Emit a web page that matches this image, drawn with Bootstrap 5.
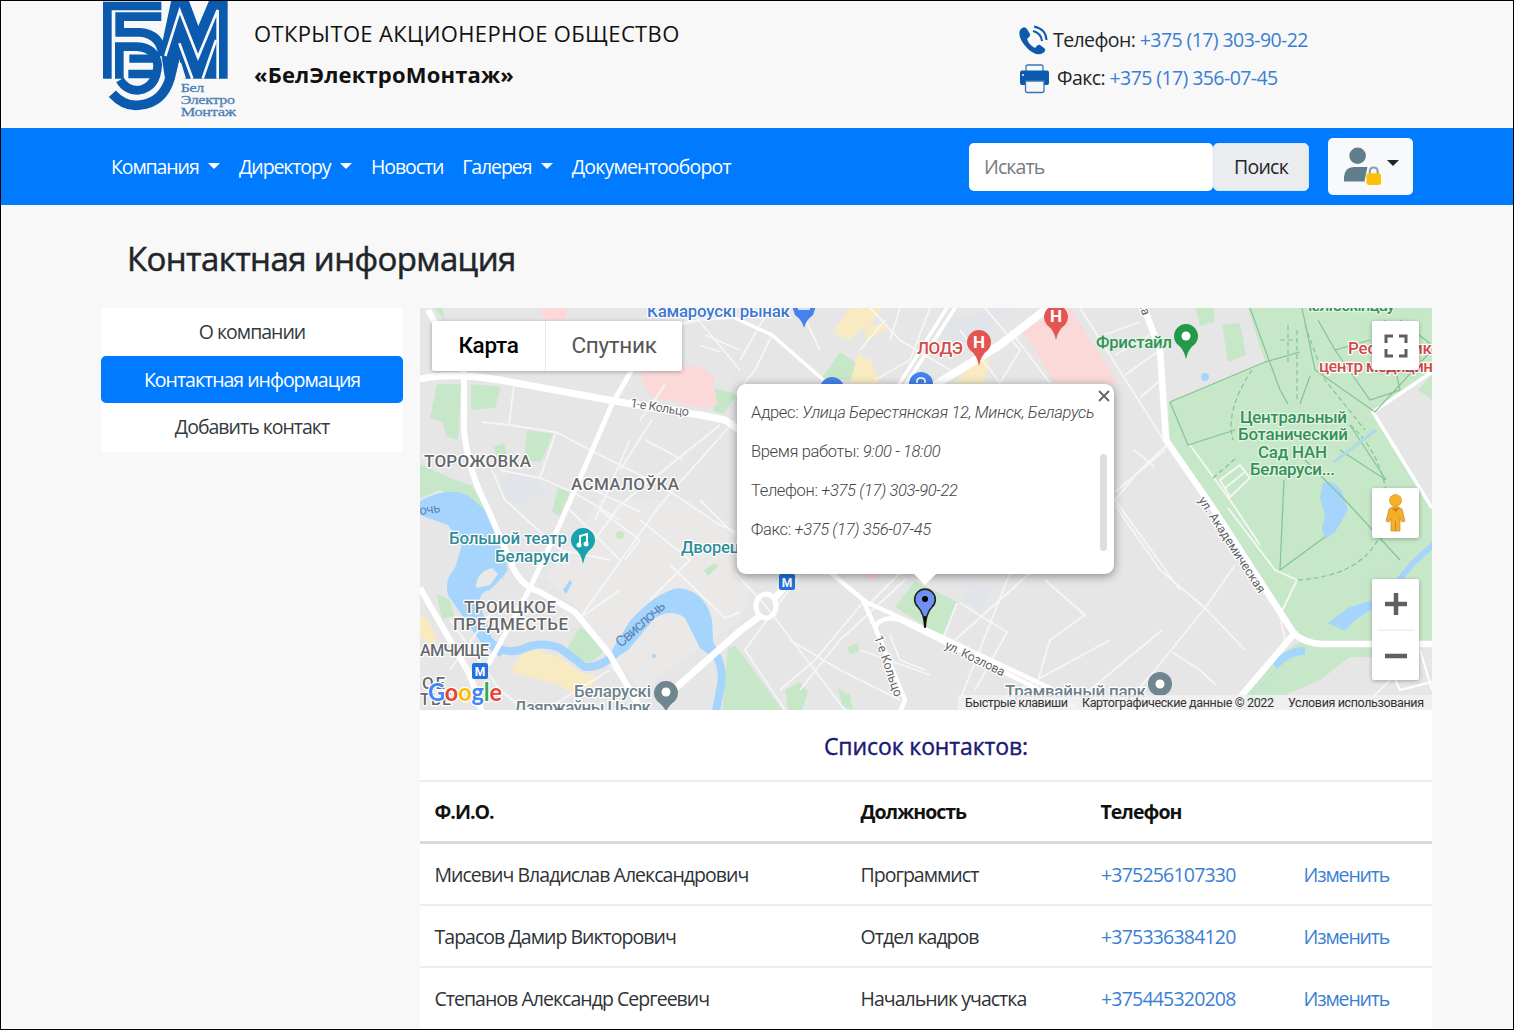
<!DOCTYPE html>
<html lang="ru">
<head>
<meta charset="utf-8">
<meta name="viewport" content="width=device-width, initial-scale=1">
<title>БелЭлектроМонтаж — Контактная информация</title>
<link href="https://cdn.jsdelivr.net/npm/bootstrap@5.3.0/dist/css/bootstrap.min.css" rel="stylesheet">
<style>
body{font-family:"Open Sans","Noto Sans",sans-serif;font-size:19.5px;line-height:1.5;color:#212529;background:#f8f8f8;height:1030px;overflow:hidden;letter-spacing:-.75px}
.page-frame{height:1030px;border:1px solid #000;overflow:hidden}
a{text-decoration:none;color:#3b7fd4}
.top-strip{height:127px;padding-left:89px}
.brand-logo{width:160px;height:130px;display:block;margin-top:-1px}
.brand-text{padding:12px 0 0 4px;color:#111;width:769px;font-size:22px}
.brand-text div{height:41px;line-height:41px;white-space:nowrap}
.bt-one{letter-spacing:.37px}
.bt-two{letter-spacing:.17px}
.phones{padding-top:20px;letter-spacing:-.58px}
.phones div{height:37.5px;white-space:nowrap}
.phones svg{width:30px;height:30px}
.main-nav{height:77px;background:#007bff;padding:0 100px 0 110px}
.main-nav .nav-link{color:#fff;padding:0;margin-right:19px;letter-spacing:-1.1px}
.main-nav .nav-link:last-child{letter-spacing:-.82px}
.main-nav .dropdown-toggle::after{margin-left:9.5px;border-top-width:6px;border-left-width:6px;border-right-width:6px;vertical-align:5px}
.search-box{width:244px;height:48px;border:0;border-radius:5px;padding:0 15px;font-size:19.5px;letter-spacing:-.9px}
.search-box::placeholder{color:#757b81}
.search-btn{width:96px;height:48px;border-radius:5px;background:#ebecee;border:1px solid #d5e6f9;font-size:19.5px;padding:0;letter-spacing:-.75px}
.user-btn{width:85px;height:57px;background:#f8f9fa;border-radius:5px;margin-left:19px;padding:0 0 0 14px}
.user-btn svg{width:39px;height:41px;margin-top:-3px}
.user-btn::after{border-top-width:6px!important;border-left-width:6px!important;border-right-width:6px!important;margin-left:5px!important;margin-bottom:8px}
.page-title{font-size:33px;font-weight:500;line-height:40px;margin:34px 0 29px 126px;letter-spacing:-.6px;color:#212529;-webkit-text-stroke:.5px #212529}
.content-row{padding-left:100px;gap:17px}
.side-menu{width:302px;background:#fff;height:144px;letter-spacing:-1px}
.side-menu a{display:block;height:47.7px;line-height:48px;text-align:center;color:#343a40;border-radius:5px}
.side-menu a.active{background:#007bff;color:#fff}
.main-col{width:1012px;background:#fff;height:730px}
.map-box{position:relative;width:1012px;height:402px;overflow:hidden;font-family:Roboto,sans-serif;letter-spacing:0}
.map-box>svg{display:block}
.map-ctl{position:absolute;background:#fff;border-radius:2px;box-shadow:0 1px 4px rgba(0,0,0,.3)}
.map-type{left:12px;top:13px;width:250px;height:50px;font-size:22.5px;letter-spacing:-.3px;color:#565656}
.map-type span{width:113px;line-height:49px;text-align:center}
.map-type span+span{width:137px;border-left:1px solid #e8e8e8}
.ctl-full{left:952px;top:13px;width:47px;height:49px}
.ctl-man{left:952px;top:180px;width:47px;height:50px}
.ctl-zoom{left:952px;top:271px;width:47px;height:101px}
.info-pop{position:absolute;left:317px;top:76px;width:377px;height:190px;background:#fff;border-radius:9px;box-shadow:0 2px 8px 1px rgba(0,0,0,.35);padding:9px 14px;font-weight:300;font-size:16.5px;color:#444;letter-spacing:-.35px}
.info-pop::after{content:"";position:absolute;left:176px;top:189px;border:12px solid transparent;border-top-color:#fff;border-bottom:0}
.info-pop p{margin:0;height:39px;line-height:39px;white-space:nowrap}
.pop-bar{position:absolute;left:363px;top:70px;width:7px;height:97px;border-radius:4px;background:#dedede}
.pop-x{position:absolute;left:361px;top:6px;width:12px;height:12px}
.list-title{height:70px;line-height:72px;text-align:center;font-size:23px;font-weight:500;color:#1a1a75;letter-spacing:-.1px;-webkit-text-stroke:.4px #1a1a75}
.contacts{table-layout:fixed;width:1012px;margin:0;letter-spacing:-.97px}
.contacts>:not(caption)>*>*{padding:1px 14.5px 0;height:61.9px;vertical-align:middle;border:0;border-top:2px solid #ececee;background:#fff;white-space:nowrap;color:#2f3337}
.contacts>thead>tr>th{color:#111;padding-top:0}
.contacts tbody tr:first-child td{border-top:3px solid #d9dadd}
.contacts tbody td a{color:#3b7fd4}
.contacts tbody td:nth-child(3){letter-spacing:-.8px;padding-left:15px}
.contacts tbody td:nth-child(4){letter-spacing:-1.15px}
</style>
</head>
<body>
<div class="page-frame">
<header class="top-strip d-flex">
  <svg class="brand-logo" viewBox="0 0 480 390">
    <g fill="none" stroke="#0b5aad" stroke-width="26">
      <path d="M52 236V18H214"/>
      <path d="M214 50H89V97H150Q213 102 218 168" stroke-width="26"/>
      <path d="M88 236V140H140Q198 143 203 195Q200 262 145 271Q108 271 90 240" stroke-width="26"/>
      <path d="M118 176H195M115 222H190" stroke-width="25"/>
      <path d="M67 281Q105 322 150 315Q218 308 240 235L268 120" stroke-width="29"/>
    </g>
    <path fill="#0b5aad" d="M244 0H296L325 78L358 0H413V236H282L262 150L225 236L212 150Z"/>
    <g fill="none" stroke="#f8f8f8" stroke-width="8">
      <path d="M226 168L269 32L324 172L383 30V236"/>
      <path d="M268 130L307 236M338 236L378 120M262 236L270 190L284 236"/>
    </g>
    <g fill="#4d7fb5" font-family="Liberation Serif,serif" font-size="38" stroke="#4d7fb5" stroke-width=".8">
      <text x="272" y="276" textLength="70" lengthAdjust="spacingAndGlyphs">Бел</text>
      <text x="272" y="311" textLength="162" lengthAdjust="spacingAndGlyphs">Электро</text>
      <text x="272" y="349" textLength="165" lengthAdjust="spacingAndGlyphs">Монтаж</text>
    </g>
  </svg>
  <div class="brand-text"><div class="bt-one">ОТКРЫТОЕ АКЦИОНЕРНОЕ ОБЩЕСТВО</div><div class="bt-two fw-bold">«БелЭлектроМонтаж»</div></div>
  <div class="phones">
    <div class="d-flex align-items-center"><svg viewBox="0 0 30 30"><path fill="#0b5aad" d="M1 5Q5 0 8 4L11 9Q12 11 8 14Q10 20 16 23Q19 19 21 20L25 23Q28 25 24 28Q18 32 9 24Q-2 13 1 5Z"/><path d="M14 6Q22 8 23 16M15 1.500Q27 4 27.500 15" fill="none" stroke="#0b5aad" stroke-width="2"/></svg><span class="ps-1">Телефон: <a href="#">+375 (17) 303-90-22</a></span></div>
    <div class="d-flex align-items-center"><svg class="mt-1" viewBox="0 0 30 30"><path d="M7 9V2.500Q7 1 9 1H22Q24 1 24 2.500V9" fill="#f8f8f8" stroke="#3974b5" stroke-width="1.300"/><rect x="1" y="6.500" width="29" height="14.500" rx="2" fill="#0b5aad"/><path d="M6.500 17H25V26.500Q25 28.500 23 28.500H8.500Q6.500 28.500 6.500 26.500Z" fill="#f8f8f8" stroke="#3974b5" stroke-width="1.300"/><circle cx="4" cy="11" r="1" fill="#fff"/></svg><span class="ps-2">Факс: <a href="#">+375 (17) 356-07-45</a></span></div>
  </div>
</header>
<nav class="main-nav d-flex align-items-center">
  <div class="d-flex me-auto">
    <a class="nav-link dropdown-toggle" href="#">Компания</a>
    <a class="nav-link dropdown-toggle" href="#">Директору</a>
    <a class="nav-link" href="#">Новости</a>
    <a class="nav-link dropdown-toggle" href="#">Галерея</a>
    <a class="nav-link" href="#">Документооборот</a>
  </div>
  <form class="d-flex"><input class="form-control search-box" type="text" placeholder="Искать"><button class="btn search-btn" type="button">Поиск</button></form>
  <button class="btn user-btn dropdown-toggle d-flex align-items-center" type="button"><svg viewBox="0 0 40 42"><circle cx="15" cy="11" r="8.500" fill="#607d8b"/><path d="M1 37.500V33Q2 22.500 11 22.500H25L22 37.500Z" fill="#607d8b"/><path d="M27.500 31V27Q27.500 23 31.500 23T35.500 27V31" fill="none" stroke="#90a0a8" stroke-width="2.200"/><rect x="24" y="29" width="15" height="12" rx="2.500" fill="#ffc107"/></svg></button>
</nav>
<h1 class="page-title">Контактная информация</h1>
<div class="content-row d-flex">
  <div class="side-menu"><a href="#">О компании</a><a class="active" href="#">Контактная информация</a><a href="#">Добавить контакт</a></div>
  <main class="main-col">
    <div class="map-box">
      <svg width="1012" height="402" viewBox="420 308 1012 402">
        <rect x="420" y="308" width="1012" height="402" fill="#e6e6e6"/>
        <!-- built-up districts -->
        <path fill="#ebe9e7" d="M545 575L600 500L690 500L760 560L740 620L640 690L600 640L580 610Z"/>
        <path fill="#e1e4e8" d="M505 475L535 470L545 495L525 505L500 500ZM945 320L1010 308L980 340L940 345ZM968 580L992 590L982 612L965 602Z"/>
        <!-- parks -->
        <g fill="#c6e8c8">
          <path d="M1248 308H1432V372L1373 412L1432 508V642H1320L1293 632L1213 508L1170 445L1168 402L1265 362Z"/>
          <path d="M1290 648L1300 642H1386V657H1350L1320 680L1250 710H1235Z"/>
          <path d="M1418 390L1432 375V400ZM1196 308H1214V322L1200 326ZM1222 325L1240 323L1246 355L1228 362Z"/>
          <path d="M437 384H461L458 440L446 436L443 422L430 418ZM471 384L501 387L495 408L471 410ZM527 430L553 434L541 462L524 460ZM715 388L737 394L724 414L713 411ZM434 308H442L446 322Z"/>
          <path d="M420 464L450 478L472 486L486 510L470 505L440 490L420 498ZM480 505H487L510 560L503 580L497 575ZM558 488L570 492L560 516L552 512ZM580 627L608 648L590 663L565 652ZM436 594L450 600L454 616L442 619Z"/>
          <path d="M728 648L736 646L784 712H722ZM915 581L957 602L943 637L895 607ZM840 352L858 364L850 380L822 378ZM785 690L800 682L808 692L802 710H788ZM838 688L850 695L853 710L842 706ZM704 570L715 563L718 567L708 576Z"/>
          <circle cx="620" cy="535" r="4"/><path d="M847 648L857 643L860 650L850 655Z"/><path d="M494 447L504 443L507 455L496 456Z"/>
        </g>
        <g fill="#fbd9d9"><path d="M640 373L655 366H700L713 375L717 405L706 409L650 396ZM1022 330L1066 308H1070L1118 383H1055ZM540 308H568L565 320H545ZM865 573H880L875 580H867Z"/></g>
        <g fill="#f9ebc1"><path d="M850 308H882L872 322L848 340L833 332ZM866 340L888 330L885 325H865ZM858 353L870 360L880 383H850ZM975 360L990 358L984 383H955ZM522 655L536 650L560 658L580 672L598 676L590 690L570 692L560 685L525 675L510 672ZM420 615L428 620L437 640L430 645L420 636Z"/></g>
        <!-- water -->
        <g fill="#a5d5fc">
          <path d="M420 501Q450 485 470 497L487 512L508 570L498 582L490 590Q478 592 480 605L492 638L505 650L500 657L482 644L468 624L448 595Q444 580 455 568L462 545L448 525L420 515Z"/>
          <path d="M612 650L630 621Q655 593 678 588Q705 590 712 620L714 658L700 648L685 618Q672 608 655 618L628 650L612 660Z"/>
          <path d="M1323 483Q1334 479 1342 492L1348 510L1335 532L1325 539L1322 528L1325 515L1320 498ZM1328 623L1348 608L1372 600L1372 609L1355 620L1345 631Z"/>
          <path d="M1395 580L1412 560L1432 542V550L1415 565L1403 580Z"/>
          <circle cx="1205" cy="377" r="4"/><circle cx="654" cy="656" r="2"/><path d="M563 590L570 580L572 583L566 594Z"/>
        </g>
        <path d="M488 640Q500 655 520 650Q540 640 560 648L585 667Q605 668 622 646M710 645Q725 665 721 685L716 711M1238 705L1275 665Q1290 650 1305 651" fill="none" stroke="#a5d5fc" stroke-width="8"/>
        <path d="M1238 706L1275 666" stroke="#c6e8c8" stroke-width="6"/>
        <path d="M476 588Q476 572 492 568L498 574L490 585Z" fill="#ebe9e7"/>
        <!-- side streets -->
        <g fill="none" stroke="#f6f6f6" stroke-width="1.800">
          <path d="M514 385L509 425L482 422M509 425L556 432L600 455L660 485L720 525L800 560M556 432L540 478L500 470M540 478L575 493L620 520M578 482L640 512M720 425L620 505L580 560M683 460L645 440M492 470L505 500L560 550L610 560M560 350L700 320L735 318M652 420L620 470M665 385L640 420M630 440L595 520"/>
          <path d="M735 420L660 505L580 618M690 310L740 370M705 335L740 350M700 345L720 352M770 308L740 360M772 335L755 370L735 395M800 308L820 350M870 308L900 340L950 370M885 320L860 350M900 308L890 340M930 308L910 360L875 380M985 308L1020 350L1000 383M1010 330L1050 383M960 330L1000 383M1080 308L1167 445L1140 470L1115 500L1180 590M1104 335L1140 322M1115 355L1150 335M1125 375L1160 350M1140 398L1163 378"/>
          <path d="M1115 505L1160 570L1205 608L1245 650M1235 565L1205 608L1155 670L1120 710M1115 492L1165 450M1134 450L1155 467M1162 630L1090 690M1172 652L1200 670L1216 685M1010 573L960 700M1030 573L955 640M960 603L1007 632L975 690M1045 580L1085 615L1050 640L1035 690M943 638L957 603M900 573L868 605"/>
          <path d="M735 573L765 605L845 710M800 575L745 650L785 710M865 600L815 660L780 690M905 580L840 640L800 690M790 640L840 670L900 700M860 650L930 675M890 635L900 660L925 670M670 565L725 618L740 612M640 520L690 560L650 600M700 500L735 535M600 510L640 540L625 560M565 505L620 560M580 618L620 590M450 620L500 690L525 710M500 600L450 670M545 710L610 670M610 665L640 700M1110 640L1000 700M1370 700L1420 650"/>
          <path d="M1228 508L1275 570L1297 580L1280 615L1285 640M1190 445L1230 500L1260 545M1220 480L1240 465L1250 478L1230 497ZM1225 488L1245 472"/>
        </g>
        <!-- main streets -->
        <g fill="none" stroke="#fff" stroke-width="7" stroke-linejoin="round">
          <path d="M420 379Q450 372 500 380L620 402L700 415L725 420L742 432" />
          <path d="M428 310L464 374M464 376V430Q468 470 486 505L510 560Q518 585 540 592L575 612L610 655L642 712" stroke-width="6"/>
          <path d="M633 368L612 404L588 460L555 535L528 592L488 665" stroke-width="5"/>
          <path d="M420 588L447 635L470 675L482 712" stroke-width="6"/>
          <path d="M670 693L740 631L760 616M775 598L792 578" stroke-width="7"/>
          <ellipse cx="766" cy="606" rx="10" ry="12" stroke-width="5"/>
          <path d="M735 318L772 335L828 384M948 306L898 386M955 308L905 386" stroke-width="3.500"/>
          <path d="M1050 306L1000 345L930 388" stroke-width="8"/>
          <path d="M825 568L866 602L942 637L1050 688L1080 712M862 598L875 627L905 700L900 712M875 627Q882 615 900 620L1040 690" stroke-width="4.500"/>
          <path d="M1143 305L1160 350L1166 440L1213 508L1293 632Q1302 643 1322 644H1432M1293 635L1225 715" stroke-width="6.500"/>
          <path d="M1432 372L1373 412L1432 508" stroke-width="3.500"/>
          <path d="M1384 655L1400 690L1432 682M1420 650L1432 690" stroke-width="2"/>
        </g>
        <!-- garden paths -->
        <g fill="none" stroke="#86c298" stroke-width="1.200">
          <path d="M1250 308L1280 390L1288 404M1305 460L1345 500L1400 560M1170 402L1265 362L1300 352M1170 402L1188 445L1235 430M1302 308L1315 370L1375 412L1432 350M1318 320L1335 350L1370 340M1335 350L1370 400L1400 390L1385 320M1284 480L1280 570L1325 537M1310 376L1300 404M1350 425L1386 480M1340 450L1386 480M1400 320L1432 345"/>
          <path d="M1252 370Q1225 410 1233 440M1213 478L1236 458M1297 330V400M1305 325L1325 380L1365 430M1288 325V365M1280 340H1298M1350 425Q1380 450 1388 500Q1385 575 1297 580" stroke-dasharray="5 3"/>
        </g>
        <path d="M1376 430L1334 462" stroke="#add9e8" stroke-width="3"/>
        <!-- map labels -->
        <g font-family="Roboto,sans-serif" font-size="17.500" font-weight="500" stroke="#fff" stroke-width="2.500" paint-order="stroke" stroke-linejoin="round">
          <g fill="#66696c" font-size="17">
            <text x="424" y="467" textLength="107">ТОРОЖОВКА</text><text x="571" y="490" textLength="108">АСМАЛОЎКА</text>
            <text x="464" y="613" textLength="92">ТРОИЦКОЕ</text><text x="453" y="630" textLength="115">ПРЕДМЕСТЬЕ</text><text x="420" y="656" textLength="69" font-size="16.500">АМЧИЩЕ</text><text x="422" y="689" textLength="23">ОЕ</text><text x="420" y="705" textLength="31" font-size="16">ТЬЕ</text>
          </g>
          <g fill="#2f8c99" font-size="17"><text x="449" y="544" textLength="118">Большой театр</text><text x="495" y="562" textLength="74">Беларуси</text><text x="681" y="553" textLength="59">Дворец</text></g>
          <g fill="#6d818b" font-size="17"><text x="574" y="697" textLength="77">Беларускі</text><text x="514" y="713" textLength="137">Дзяржаўны Цырк</text><text x="1005" y="697" textLength="141">Трамвайный парк</text></g>
          <text x="647" y="317" textLength="143" font-size="17" fill="#3e78d3">Камароўскі рынак</text>
          <g fill="#d14a48" font-size="17"><text x="917" y="354" textLength="46">ЛОДЭ</text><text x="1348" y="354" textLength="84">Республик</text><text x="1319" y="372" textLength="114">центр медицин</text></g>
          <g fill="#359058" font-size="17" stroke="#e3f4e5"><text x="1096" y="348" textLength="76">Фристайл</text><text x="1301" y="311" textLength="94">Чалюскінцаў</text><text x="1240" y="423" textLength="107">Центральный</text><text x="1238" y="440" textLength="110">Ботанический</text><text x="1258" y="458" textLength="69">Сад НАН</text><text x="1250" y="475" textLength="85">Беларуси...</text></g>
          <g fill="#5f6368" font-size="12.500" font-weight="400">
            <text transform="translate(630 407) rotate(9)" textLength="59">1-е Кольцо</text>
            <text transform="translate(874 637) rotate(71)" textLength="64">1-е Кольцо</text>
            <text transform="translate(944 648) rotate(26)" textLength="65">ул. Козлова</text>
            <text transform="translate(1198 500) rotate(57)" textLength="112">ул. Академическая</text>
            <text transform="translate(1138 303) rotate(70)">на</text>
          </g>
          <g fill="#5b83b8" stroke="none" font-size="15" font-weight="400"><text transform="translate(621 648) rotate(-42)" textLength="61">Свислочь</text><text transform="translate(420 515) rotate(-8)" textLength="21" font-size="13">очь</text></g>
        </g>
        <!-- place pins -->
        <path fill="#16a2ae" d="M583 564Q581 553 574 548A12 12 0 1 1 592 548Q585 553 583 564Z"/>
        <path d="M580 545V536L587 534V543" fill="none" stroke="#fff" stroke-width="2"/><circle cx="579" cy="545" r="2.500" fill="#fff"/><circle cx="586" cy="544" r="2.500" fill="#fff"/>
        <path fill="#6f858f" d="M666 712Q664 706 657 701A12 12 0 1 1 675 701Q668 706 666 712Z"/><circle cx="666" cy="692" r="4.500" fill="#fff"/>
        <circle cx="1160" cy="684" r="12" fill="#6f858f"/><circle cx="1160" cy="684" r="4.500" fill="#fff"/>
        <path fill="#25994a" d="M1186 359Q1184 349 1177 344A12 12 0 1 1 1195 344Q1188 349 1186 359Z"/><circle cx="1186" cy="336" r="4.500" fill="#fff"/>
        <g fill="#e35551"><path d="M979 366Q977 355 970 350A12 12 0 1 1 988 350Q981 355 979 366Z"/><path d="M1056 340Q1054 330 1047 325A12 12 0 1 1 1065 325Q1058 330 1056 340Z"/></g>
        <g fill="#fff" font-family="Roboto,sans-serif" font-weight="700" font-size="17" text-anchor="middle"><text x="979" y="348">H</text><text x="1056" y="322">H</text></g>
        <g fill="#4482ed"><path d="M804 328Q802 320 795 315L792 306H816L813 315Q806 320 804 328Z"/><circle cx="832" cy="389" r="12"/><circle cx="921" cy="384" r="12"/></g>
        <path d="M798 309H810M917 383V381Q917 378 921 378T925 381V383" stroke="#fff" stroke-width="1.600" fill="none"/>
        <g fill="#2271df"><rect x="779" y="574" width="16" height="16" rx="2"/><rect x="472" y="663" width="16" height="16" rx="2"/></g>
        <g fill="#fff" font-family="Roboto,sans-serif" font-weight="700" font-size="12" text-anchor="middle"><text x="787" y="586.500">М</text><text x="480" y="675.500">М</text></g>
        <path d="M925 628Q924 613 918 607A10.300 10.300 0 1 1 932 607Q926 613 925 628Z" fill="#6d91f5" stroke="#222" stroke-width="1.600"/><circle cx="925" cy="599" r="3" fill="#000"/><path d="M925 616V627" stroke="#111" stroke-width="2.200"/>
        <rect x="958" y="695" width="474" height="15" fill="#f2f2f2" opacity=".82"/>
        <g fill="#333" font-family="Roboto,sans-serif" font-size="12.500"><text x="965" y="707" textLength="103">Быстрые клавиши</text><text x="1082" y="707" textLength="192">Картографические данные © 2022</text><text x="1288" y="707" textLength="136">Условия использования</text></g>
        <text x="428" y="701" font-family="Lato,sans-serif" font-weight="700" font-size="24" textLength="74" lengthAdjust="spacingAndGlyphs" stroke="#fff" stroke-width="2.500" paint-order="stroke"><tspan fill="#4285f4">G</tspan><tspan fill="#ea4335">o</tspan><tspan fill="#fbbc05">o</tspan><tspan fill="#4285f4">g</tspan><tspan fill="#34a853">l</tspan><tspan fill="#ea4335">e</tspan></text>
      </svg>
      <div class="map-ctl map-type d-flex"><span class="text-black fw-medium">Карта</span><span>Спутник</span></div>
      <div class="map-ctl ctl-full"><svg width="47" height="49" viewBox="0 0 47 49"><path d="M14 22V15H21M27 15H34V22M34 28V35H27M21 35H14V28" fill="none" stroke="#5f5f5f" stroke-width="3"/></svg></div>
      <div class="map-ctl ctl-man"><svg width="47" height="50" viewBox="0 0 47 50"><path d="M17 21Q23 16 30 21L33 33L30 34L28 30V43H19V30L17 34L14 33Z" fill="#f3ae2c" stroke="#c88b1d" stroke-width=".7"/><circle cx="23.500" cy="12.500" r="6" fill="#f6b02a" stroke="#d49422" stroke-width=".7"/><path d="M19 19Q23 22 28 19L24 24Z" fill="#ca7d15"/><path d="M23.500 33V43" stroke="#c88b1d"/></svg></div>
      <div class="map-ctl ctl-zoom"><svg width="47" height="101" viewBox="0 0 47 101"><path d="M13 25H35M24 14V36M13 77H35" stroke="#606060" stroke-width="4.500"/><path d="M6 51H42" stroke="#e6e6e6"/></svg></div>
      <div class="info-pop"><p>Адрес: <i>Улица Берестянская 12, Минск, Беларусь</i></p><p>Время работы: <i>9:00 - 18:00</i></p><p>Телефон: <i>+375 (17) 303-90-22</i></p><p>Факс: <i>+375 (17) 356-07-45</i></p>
        <span class="pop-bar"></span><svg class="pop-x" viewBox="0 0 12 12"><path d="M1 1L11 11M11 1L1 11" stroke="#666" stroke-width="2"/></svg></div>
    </div>
    <div class="list-title">Список контактов:</div>
    <table class="table contacts">
      <colgroup><col style="width:426px"><col style="width:240px"><col style="width:203px"><col></colgroup>
      <thead><tr><th>Ф.И.О.</th><th>Должность</th><th>Телефон</th><th></th></tr></thead>
      <tbody>
        <tr><td>Мисевич Владислав Александрович</td><td>Программист</td><td><a href="#">+375256107330</a></td><td><a href="#">Изменить</a></td></tr>
        <tr><td>Тарасов Дамир Викторович</td><td>Отдел кадров</td><td><a href="#">+375336384120</a></td><td><a href="#">Изменить</a></td></tr>
        <tr><td>Степанов Александр Сергеевич</td><td>Начальник участка</td><td><a href="#">+375445320208</a></td><td><a href="#">Изменить</a></td></tr>
      </tbody>
    </table>
  </main>
</div>
</div>
<script src="https://cdn.jsdelivr.net/npm/bootstrap@5.3.0/dist/js/bootstrap.bundle.min.js"></script>
</body>
</html>
